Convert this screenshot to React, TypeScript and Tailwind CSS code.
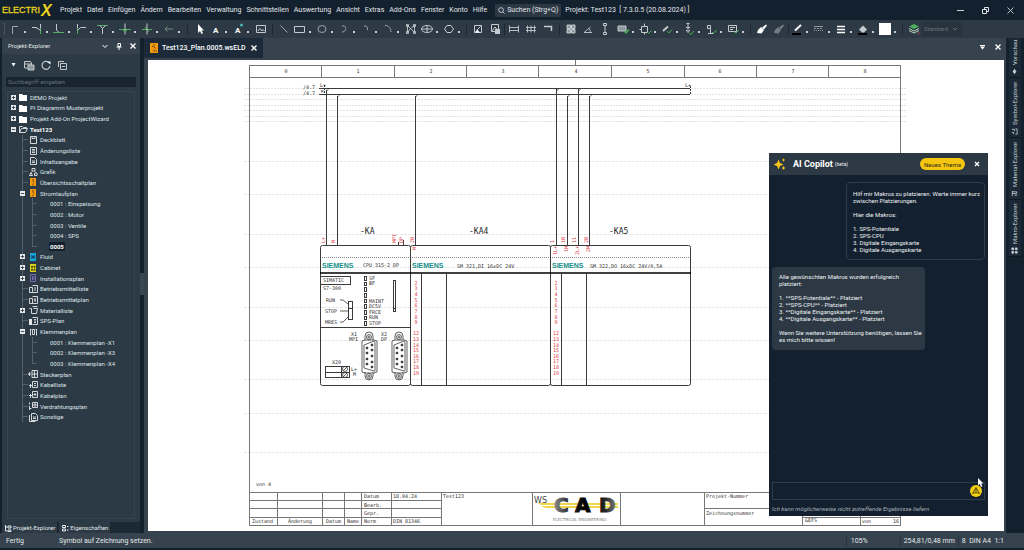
import React from "react";
import type { ReactNode } from "react";

/* ---------- data ---------- */

const MENU = [
  "Projekt", "Datei", "Einfügen", "Ändern", "Bearbeiten", "Verwaltung", "Schnittstellen",
  "Auswertung", "Ansicht", "Extras", "Add-Ons", "Fenster", "Konto", "Hilfe",
];

type Row = { level: number; text: string; icon?: string; open?: "+" | "-"; bold?: boolean; selected?: boolean; last?: boolean };

const TREE: Row[] = [
  { level: 0, text: "DEMO Projekt", icon: "folder", open: "+" },
  { level: 0, text: "PI Diagramm Musterprojekt", icon: "folder", open: "+" },
  { level: 0, text: "Projekt Add-On ProjectWizard", icon: "folder", open: "+" },
  { level: 0, text: "Test123", icon: "folderOpen", open: "-", bold: true },
  { level: 1, text: "Deckblatt", icon: "cover" },
  { level: 1, text: "Änderungsliste", icon: "list" },
  { level: 1, text: "Inhaltsangabe", icon: "page" },
  { level: 1, text: "Grafik", icon: "shapes" },
  { level: 1, text: "Übersichtsschaltplan", icon: "orange" },
  { level: 1, text: "Stromlaufplan", icon: "orange", open: "-" },
  { level: 2, text: "0001 : Einspeisung" },
  { level: 2, text: "0002 : Motor" },
  { level: 2, text: "0003 : Ventile" },
  { level: 2, text: "0004 : SPS" },
  { level: 2, text: "0005", selected: true, bold: true, last: true },
  { level: 1, text: "Fluid", icon: "blue", open: "+" },
  { level: 1, text: "Cabinet", icon: "yellow", open: "+" },
  { level: 1, text: "Installationsplan", icon: "purple", open: "+" },
  { level: 1, text: "Betriebsmittelliste", icon: "devlist" },
  { level: 1, text: "Betriebsmittelplan", icon: "devplan" },
  { level: 1, text: "Materialliste", icon: "cart", open: "+" },
  { level: 1, text: "SPS-Plan", icon: "plc" },
  { level: 1, text: "Klemmenplan", icon: "terminal", open: "-" },
  { level: 2, text: "0001 : Klemmenplan -X1" },
  { level: 2, text: "0002 : Klemmenplan -X3" },
  { level: 2, text: "0003 : Klemmenplan -X4", last: true },
  { level: 1, text: "Steckerplan", icon: "plug" },
  { level: 1, text: "Kabelliste", icon: "cablelist" },
  { level: 1, text: "Kabelplan", icon: "cableplan" },
  { level: 1, text: "Verdrahtungsplan", icon: "wiring" },
  { level: 1, text: "Sonstige", icon: "misc", last: true },
];

/* ---------- tree icons ---------- */

function TreeIcon({ name }: { name: string }) {
  const art: Record<string, ReactNode> = {
    folder: <path d="M1 2h3l1 1h4v6H1z" fill="#fff" stroke="none" />,
    folderOpen: <path d="M1.500 8.500v-6h3l1 1h3v1M1.500 8.500l2-4h6l-2 4z" />,
    cover: <path d="M2.500 1.500h6v7h-6zM4 1.500v2h3v-2" />,
    list: <path d="M2.500 1.500h6v7h-6zM4 3.500h3M4 5h3M4 6.500h3" />,
    page: <path d="M2.500 1.500h4l2 2v5h-6zM4 5h3M4 6.500h3" />,
    shapes: <path d="M4 1.500h3v2.500H4zM1.500 8.500l1.500-3 1.500 3zM6.500 6h2.500v2.500H6.500zM4 4.500l-1 1M7 4.500l1 1" />,
    orange: (
      <>
        <path d="M2 1h6v8H2z" fill="#f39a12" stroke="none" />
        <path d="M5 2v2l1 1.500M5 6.500v2" stroke="#5c3a05" />
      </>
    ),
    blue: (
      <>
        <path d="M2 1h6v8H2z" fill="#16a5d8" stroke="none" />
        <path d="M2.500 5h5M3.500 3l3 4M6.500 3l-3 4" stroke="#0b3d5c" />
      </>
    ),
    yellow: (
      <>
        <path d="M2 1h6v8H2z" fill="#e2d51d" stroke="none" />
        <path d="M3.500 3h1v1.500h-1zM6 3h1v1.500H6zM3.500 6h1v1.500h-1zM6 6h1v1.500H6z" stroke="#4b4708" />
      </>
    ),
    purple: <path d="M2.500 1.500h5v7h-5zM4.500 3v4M6 3v4" stroke="#8272c4" />,
    devlist: <path d="M1.500 3.500h3v5h-3zM4.500 1.500h5v7h-5M6 4h2M6 6h2" />,
    devplan: <path d="M1.500 3.500h3v5h-3zM4.500 1.500h5v7h-5M7 3v4M6 5h2" />,
    cart: <path d="M1.500 3.500h2v5h5l1-5h-4M4.500 1.500h5" />,
    plc: (
      <>
        <path d="M1 3h3v6H1z" fill="#e5e8ea" stroke="none" />
        <path d="M4.500 1.500h5v7h-5M6 3.500h2M6 5h2M6 6.500h2" />
      </>
    ),
    terminal: <path d="M2.500 2v6.500M8.500 2v6.500M4.500 2.500h2v5h-2zM2.500 2.500h1M7.500 2.500h1" />,
    plug: <path d="M0 5h3M1.500 3v4M4 1.500h5.500v7H4zM4 5h5.500M6.500 1.500v7" />,
    cablelist: <path d="M1 5.500h3M2.500 4v4M4.500 1.500h5v6h-5zM6 3.500h2M6 5.500h2" />,
    cableplan: <path d="M1 5.500h3M2.500 4v4M4.500 1.500h5v6h-5zM7 3v3M5.500 4.500h3" />,
    wiring: <path d="M1.500 1.500v2M1.500 5v4M4.500 1.500h5v5h-5zM7 2v4M5 4h4M1.500 7.500h2" />,
    misc: <path d="M3.500 1.500h4l2 2v5h-6zM1.500 3v6.500h6M5 5h3M5 6.500h3" />,
  };
  return (
    <svg viewBox="0 0 11 10" className="h-[10px] w-[11px] shrink-0" fill="none" stroke="#e5e8ea" strokeWidth="0.9" aria-hidden="true">
      {art[name]}
    </svg>
  );
}

function Expander({ sign }: { sign: "+" | "-" }) {
  return (
    <svg viewBox="0 0 6 6" className="h-[5px] w-[5px] shrink-0" aria-hidden="true">
      <rect width="6" height="6" fill="#e9ecee" />
      <path d={sign === "+" ? "M1 3h4M3 1v4" : "M1 3h4"} stroke="#26323d" strokeWidth="1" />
    </svg>
  );
}

function TreeRow({ row }: { row: Row }) {
  return (
    <li className="flex items-center">
      {row.level >= 1 && (
        <span className="ml-[11px] flex w-[6px] shrink-0 items-center self-stretch">
          <span className="flex w-full items-center self-stretch border-l border-[#53616c]">
            {row.level === 1 && !row.open && <span className="w-full border-t border-[#53616c]" />}
            {row.open && <span className="-ml-[3px] flex"><Expander sign={row.open} /></span>}
          </span>
        </span>
      )}
      {row.level === 2 && (
        <span className="ml-1 flex w-[17px] shrink-0 self-stretch">
          <span className={row.last ? "mb-[5px] flex w-[5px] items-end border-l border-b border-[#53616c]" : "flex w-[5px] items-center border-l border-[#53616c]"}>
            {!row.last && <span className="w-full border-t border-[#53616c]" />}
          </span>
        </span>
      )}
      {row.level === 0 && <span className="flex w-[7px] shrink-0"><Expander sign={row.open ?? "+"} /></span>}
      {row.icon && <TreeIcon name={row.icon} />}
      <button
        type="button"
        className={
          "whitespace-nowrap px-px text-left text-[6px] leading-[9px] " +
          (row.bold ? "font-bold text-white " : "text-[#dfe4e8] ") +
          (row.selected ? "bg-[#14202d]" : "")
        }
      >
        {row.text}
      </button>
    </li>
  );
}

/* ---------- toolbar ---------- */

function Tool({ label, dot, dim, children }: { label: string; dot?: boolean; dim?: boolean; children: ReactNode }) {
  return (
    <button type="button" aria-label={label} className={dot ? "flex w-[22px] shrink-0 items-center pl-px" : "flex w-[17px] shrink-0 items-center justify-center"}>
      <svg viewBox="0 0 14 14" className="size-[14px] shrink-0" fill="none" stroke={dim ? "#727c84" : "#c3c9cd"} strokeWidth="1" aria-hidden="true">
        {children}
      </svg>
      {dot && <span className="mt-[6px] ml-[2px] size-[2px] shrink-0 bg-[#c9ced2]" />}
    </button>
  );
}

function Sep({ wide }: { wide?: boolean }) {
  return (
    <span className={wide ? "flex w-[6px] shrink-0 justify-center" : "flex w-[2px] shrink-0 justify-center"}>
      <span className="h-3 w-px bg-[#1c2935]" />
    </span>
  );
}

const GREEN = "#4fae5b";

function Toolbar() {
  return (
    <div role="toolbar" className="flex h-[18px] shrink-0 items-center bg-[#2d3a45] pl-1">
      <span className="mr-px h-3 w-[2px] border-l border-dotted border-[#5b6872]" />
      <Tool label="Verbindung" dot><path d="M4.500 12V4.500H10" stroke="#9aa4ab" /></Tool>
      <Tool label="Abzweig links" dot><path d="M2 5.500h5M10.500 2v10" stroke={GREEN} /><path d="M2 5.500h4l4 2.500h1M10.500 2v4" /></Tool>
      <Tool label="Abzweig unten" dot><path d="M1 10.500h11" stroke={GREEN} /><path d="M4.500 2v6l2.500 2.500" /></Tool>
      <Tool label="Abzweig rechts" dot><path d="M3.500 2v10" stroke={GREEN} /><path d="M3.500 8.500l3-3H12M3.500 2v4" /></Tool>
      <Tool label="Abzweig oben" dot><path d="M1 3.500h11" stroke={GREEN} /><path d="M6.500 12V6.500L4 3.500M6.500 6.500l3-3" /></Tool>
      <Tool label="Kreuzung" dot><path d="M1 7.500h12" stroke={GREEN} /><path d="M7 1.500v11" /><path d="M4.500 7.500L7 10l2.500-2.500" stroke={GREEN} /></Tool>
      <Tool label="Knoten" dot><path d="M2 7.500h10M5 5l4 5" stroke={GREEN} /><path d="M7 1.500v11" /></Tool>
      <Tool label="Pfeil" dot><path d="M11 7H3M5.500 4.500L3 7l2.500 2.500" stroke="#6f8b7b" /></Tool>
      <span className="w-px shrink-0" />
      <Sep wide />
      <span className="w-px shrink-0" />
      <Tool label="Auswahl"><path d="M5 2v9l2-2 1.500 3 1.500-.7L8.500 8.500H11z" fill="#fff" stroke="none" /></Tool>
      <Tool label="Text" dot><text x="4" y="11" fontSize="8" fontWeight="700" fontFamily="Roboto, sans-serif" fill="#fff" stroke="none">A</text></Tool>
      <Tool label="Referenztext" dot><text x="4" y="11" fontSize="8" fontWeight="700" fontFamily="Roboto, sans-serif" fill="#fff" stroke="none">A</text><circle cx="10.500" cy="3" r="1.500" fill="#49b8b4" stroke="none" /></Tool>
      <Tool label="Bild"><path d="M2.500 3.500h9v7h-9zM4 9l2-2.500L8 9l1-1.500L10.500 9" /></Tool>
      <Sep wide />
      <Tool label="Linie"><path d="M3.500 3.500l7 7" stroke="#9aa4ab" /></Tool>
      <Tool label="Rechteck" dot><path d="M1.500 4.500h10v6h-10z" /></Tool>
      <Tool label="Ellipse" dot><ellipse cx="7" cy="7" rx="4" ry="3.500" stroke="#9aa4ab" /></Tool>
      <Tool label="Bogen" dot><path d="M5 4c5-1 5 6 0 6" stroke="#9aa4ab" /></Tool>
      <Tool label="Kreisbogen" dot><path d="M5 4c2.500-.5 4 1.500 3.500 4" stroke="#9aa4ab" /></Tool>
      <Tool label="Viertelbogen" dot><path d="M4 3.500c4 0 6 3 6 6.500" stroke="#9aa4ab" /></Tool>
      <Tool label="Polygon"><path d="M3.500 3.500l3 3 4-3M3.500 3.500v7l3-4M10.500 3.500v7M6.500 6.500l4 4M2.500 2.500h2v2h-2zM9.500 2.500h2v2h-2zM2.500 9.500h2v2h-2zM9.500 9.500h2v2h-2z" strokeWidth="0.900" /></Tool>
      <Tool label="Fläche" dot><ellipse cx="7" cy="7" rx="5.500" ry="3.500" /><path d="M1.500 7h11M7 3.500v7" /></Tool>
      <Tool label="Sechseck" dot><path d="M5 3.500h4L11.500 7 9 10.500H5L2.500 7z" /></Tool>
      <Sep wide />
      <Tool label="Grafik"><path d="M3.500 3.500h7v7h-7zM6 8l3.500-3.500" /><path d="M4 10.500l2-3 3 3z" fill="#fff" stroke="none" /></Tool>
      <Tool label="Grafik einfügen"><path d="M3.500 2.500h7v7h-7zM4 9l3-4 2 2.500" /><path d="M7 7h5v5H7z" fill="#c3c9cd" stroke="none" /></Tool>
      <Sep />
      <Tool label="Bemaßung"><path d="M2.500 3.500v7M11.500 3.500v7M2.500 5.500h9M2.500 8.500h9" strokeWidth="0.900" /></Tool>
      <Tool label="Kettenmaß"><path d="M3.500 3.500v7M7 3.500v7M10.500 3.500v7M2 5.500h10M2 8.500h10" strokeWidth="0.900" /></Tool>
      <Tool label="Versatz"><path d="M3 4.500h7.500V9" strokeWidth="1.500" /></Tool>
      <Sep wide />
      <Tool label="Raster"><path d="M3 3h3.500v3.500H3zM7.500 3H11v3.500H7.500zM3 7.500h3.500V11H3zM7.500 7.500H11V11H7.500z" fill="#8d979e" /></Tool>
      <Tool label="Winkel"><path d="M3 10.500h8M3 10.500L9.500 5M7.500 6.500c2 1 2 3 1.500 4" strokeWidth="0.900" /></Tool>
      <Tool label="Abstand"><path d="M7 3v8M5.500 1.500h3v2h-3zM5.500 10.500h3v2h-3z" /></Tool>
      <span className="w-[2px] shrink-0" />
      <Tool label="Bauteil prüfen" dot><path d="M2 4h8v5H2z" fill="#8d979e" /><path d="M8 9l2 2 3-3.500" stroke={GREEN} strokeWidth="1.500" /></Tool>
      <Tool label="Symbol prüfen" dot><path d="M3.500 4.500h6v6h-6zM6.500 1.500v3M6.500 10.500v2M1.500 7.500h2" /><path d="M9 10l1.500 1.500 3-3" stroke={GREEN} /></Tool>
      <Tool label="Verbindung prüfen" dot><path d="M3 9l5-4.500" strokeWidth="2" /><path d="M7 9l2 2 3-3.500" stroke={GREEN} /></Tool>
      <Tool label="Klemme prüfen" dot><path d="M6 2v7M4 5.500h4M4 8l2 2.500L8 8M4.500 1.500h3" /><path d="M7 11l2 1.500 3-3.500" stroke={GREEN} /></Tool>
      <Tool label="Kabel prüfen" dot><path d="M3.500 3.500h3v3h-3zM6.500 6.500v5M4 11.500h5" /><path d="M8 10l1.500 1.500 3-3.500" stroke={GREEN} /></Tool>
      <Tool label="Formular prüfen" dot><path d="M2.500 3.500h8v6h-8zM4 5.500h5M4 7.500h3" /><path d="M8 9.500l2 1.500 3-3" stroke={GREEN} /></Tool>
      <Sep wide />
      <Tool label="Format übertragen"><path d="M3 8l3-3 3 3-2.500 3.500L2 11zM7 5.500l4-3 1 1L9 7.500z" fill="#fff" stroke="none" /></Tool>
      <Tool label="Format einfügen" dim><path d="M3 8l3-3 3 3-2.500 3.500L2 11zM7 5.500l4-3 1 1L9 7.500z" fill="#727c84" stroke="none" /></Tool>
      <Sep />
      <Tool label="Linienfarbe" dot><path d="M5 8.500l6-5.500" stroke="#fff" strokeWidth="1.800" /><path d="M2 11h9v2H2z" fill="#000" stroke="none" /></Tool>
      <Tool label="Linienart" dot><g stroke="#8d979e"><path d="M2 4.500h9" /><path d="M2 6.500h9" strokeDasharray="2 1" /><path d="M2 8.500h9" strokeDasharray="1 1" /></g></Tool>
      <Tool label="Linienstärke" dot><path d="M3 4.500h8M3 7.500h8M3 10.500h8" strokeWidth="1.400" stroke="#fff" /></Tool>
      <Tool label="Füllfarbe" dot><path d="M3 7.500l4-4 4 4-3 3H6z" fill="#c3c9cd" stroke="none" /><path d="M2 11h9v2H2z" fill="#000" stroke="none" /></Tool>
      <Tool label="Weiß" dot><path d="M1 1h12v12H1z" fill="#fff" stroke="none" /></Tool>
      <Sep wide />
      <Tool label="Ebenen"><path d="M7 2l5 2.500L7 7 2 4.500z" fill={GREEN} stroke="none" /><path d="M2 6.500L7 9l5-2.500M2 8.500L7 11l5-2.500" stroke="#b9d6bd" /><path d="M10.500 10.500l2 2M12.500 10.500l-2 2" stroke="#a8405c" /></Tool>
      <label className="relative flex items-center">
        <span className="sr-only">Ebene</span>
        <select className="h-[14px] w-10 appearance-none bg-[#27333d] pl-[2px] text-[6px] leading-[14px] text-[#66717a]">
          <option>Standard</option>
        </select>
        <svg viewBox="0 0 6 4" className="pointer-events-none absolute right-1 h-1 w-[6px]" fill="none" stroke="#66717a" aria-hidden="true"><path d="M1 1l2 2 2-2" /></svg>
      </label>
    </div>
  );
}

/* ---------- schematic ---------- */

const LINE = "#3a3a3a";
const RED = "#e03a40";
const PINS: [string, number][] = [
  ["2", 283], ["3", 288], ["4", 294], ["5", 300], ["6", 305], ["7", 311], ["8", 317], ["9", 322],
  ["12", 333], ["13", 339], ["14", 345], ["15", 350], ["16", 356], ["17", 361], ["18", 367], ["19", 373],
];

function Connector({ x }: { x: number }) {
  return (
    <g transform={`translate(${x} 331)`} fill="none" stroke={LINE} strokeWidth="0.8">
      <path d="M4 9V5q0-4 4-4t4 4v4M4 41v4q0 4 4 4t4-4v-4" />
      <circle cx="8" cy="6" r="2.500" />
      <circle cx="8" cy="6" r="1" />
      <circle cx="8" cy="45" r="2.500" />
      <circle cx="8" cy="45" r="1" />
      <path d="M1 10l3-1h9l3 1v31l-3 1H4l-3-1z" />
      <path d="M3 14l10-4q1 0 1 2v27q0 2-1 1L3 37z" />
      {[14, 19, 25, 31, 36].map((y) => <circle key={y} cx="11" cy={y} r="1" fill="#111" />)}
      {[17, 22, 28, 33].map((y) => <circle key={y} cx="6" cy={y} r="1" fill="#111" />)}
    </g>
  );
}

function Side({ x, y, children, fill = RED }: { x: number; y: number; children: ReactNode; fill?: string }) {
  return <text transform={`translate(${x} ${y}) rotate(-90)`} fill={fill}>{children}</text>;
}

function Schematic() {
  return (
    <svg
      viewBox="148 60 856 471"
      className="block h-full w-full"
      role="img"
      aria-label="Stromlaufplan 0005"
      fontFamily="'DejaVu Sans Mono', 'Liberation Mono', monospace"
      fontSize="5"
      fill="#333"
    >
      {/* guide lines */}
      <g fill="none" shapeRendering="crispEdges">
        <path d="M244 88.500H906M244 94.500H906M244 99.500H906M244 105.500H906M244 110.500H906M244 116.500H906M244 121.500H906" stroke="#e2e2e2" strokeDasharray="2 1" />
        <path d="M244 161.500H906M244 194.500H906M244 234.500H906M244 267.500H906M244 307.500H906M244 340.500H906M244 379.500H906M244 413.500H906M244 452.500H906" stroke="#e6e6e6" strokeDasharray="3 1" />
      </g>

      {/* sheet frame */}
      <g fill="none" stroke="#777" shapeRendering="crispEdges">
        <path d="M249.500 65.500H900.500V525.500H249.500zM249.500 77.500H900" />
        <path d="M321.500 65v12M394.500 65v12M466.500 65v12M538.500 65v12M611.500 65v12M684.500 65v12M756.500 65v12M828.500 65v12M575.500 60v5" />
      </g>
      <g textAnchor="middle">
        {[0, 1, 2, 3, 4, 5, 6, 7, 8].map((n) => <text key={n} x={286 + Math.round(n * 72.4)} y="73">{n}</text>)}
      </g>

      {/* potentials and wires */}
      <g fill="none" stroke={LINE} shapeRendering="crispEdges">
        <path d="M319 88.500H690M319 94.500H690" />
        <path d="M326.500 90V245M337.500 96V245M415.500 96V245M556.500 88V245M567.500 96V245M578.500 88V245M589.500 96V245" />
        <path d="M324.500 85v10M690.500 86v9" strokeDasharray="2 1" />
        <path d="M403.500 240v5M398.500 242v3" />
      </g>
      <path d="M326.500 91l3-3M337.500 97l3-3M415.500 97l3-3M556.500 91l3-3M567.500 97l3-3M578.500 91l3-3M589.500 97l3-3" stroke={LINE} strokeWidth="0.8" />
      <text x="303" y="89">/4.7</text>
      <text x="303" y="95">/4.7</text>
      <text x="320" y="87">L+</text>
      <text x="685" y="87">L+</text>
      <text x="321" y="93" fontSize="4">M</text>

      {/* modules */}
      <g fill="none" stroke={LINE}>
        <rect x="320.500" y="245.500" width="90" height="140" rx="2" />
        <rect x="410.500" y="245.500" width="140" height="140" rx="2" />
        <rect x="550.500" y="245.500" width="140" height="140" rx="2" />
        <path d="M322 257.500H409M412 257.500H549M552 257.500H689" stroke="#888" strokeDasharray="1 1" />
        <path d="M320 273H691" stroke="#000" strokeWidth="1.500" />
        <path d="M320 327.500h90M421.500 273v112M446.500 273v112M561.500 273v112M586.500 273v112" />
      </g>
      <g fill="#148f8c" fontFamily="'Liberation Sans', Arial, sans-serif" fontWeight="700" fontSize="7">
        <text x="322" y="268">SIEMENS</text>
        <text x="412" y="268">SIEMENS</text>
        <text x="552" y="268">SIEMENS</text>
      </g>
      <g fontSize="8" fill="#222">
        <text x="360" y="234">-KA</text>
        <text x="469" y="234">-KA4</text>
        <text x="609" y="234">-KA5</text>
      </g>
      <text x="363" y="267">CPU 315-2 DP</text>
      <text x="457" y="268">SM 321,DI 16xDC 24V</text>
      <text x="590" y="268">SM 322,DO 16xDC 24V/0,5A</text>

      <g fill={RED} textAnchor="middle">
        {PINS.map(([p, y]) => <text key={p} x="416" y={y + 2}>{p}</text>)}
        {PINS.map(([p, y]) => <text key={p} x="556" y={y + 2}>{p}</text>)}
      </g>
      <Side x={325} y={243}>L+</Side>
      <Side x={335} y={243}>M</Side>
      <Side x={396} y={243}>MPI</Side>
      <Side x={403} y={243}>DP</Side>
      <Side x={414} y={243}>20</Side>
      <Side x={416} y={250}>M</Side>
      <Side x={554} y={243}>1</Side>
      <Side x={565} y={243}>10</Side>
      <Side x={576} y={243}>11</Side>
      <Side x={588} y={243}>20</Side>
      <Side x={557} y={255}>1L+</Side>
      <Side x={568} y={252}>1M</Side>
      <Side x={579} y={255}>2L+</Side>
      <Side x={590} y={252}>2M</Side>

      {/* CPU front */}
      <g fill="none" stroke={LINE} shapeRendering="crispEdges">
        <path d="M321 276.500h29.500v8H321" />
        <path d="M348.500 301.500h4v18h-4zM348.500 308.500h4" />
        <path d="M364.500 276.500h2v4h-2zM364.500 282.500h2v3h-2zM364.500 287.500h2v4h-2zM364.500 293.500h2v4h-2zM364.500 299.500h2v3h-2zM364.500 304.500h2v4h-2zM364.500 310.500h2v4h-2zM364.500 316.500h2v3h-2zM364.500 321.500h2v4h-2z" />
        <path d="M393.500 280.500h2v31h-2zM393.500 308.500h2" />
        <path d="M325.500 366.500h24v11h-24zM341.500 366v12M325 372.500h24" />
      </g>
      <g fill="none" stroke={LINE} strokeWidth="0.8">
        <path d="M340 300h3l5 4M340 311h8M340 322h3l5-5" />
        <circle cx="345" cy="369" r="2.500" />
        <circle cx="345" cy="375" r="2.500" />
        <path d="M343 371l4-4M343 377l4-4" />
      </g>
      <text x="323" y="282">SIMATIC</text>
      <text x="323" y="290">S7-300</text>
      <text x="326" y="302">RUN</text>
      <text x="325" y="313">STOP</text>
      <text x="325" y="324">MRES</text>
      <text x="369" y="280">SF</text>
      <text x="369" y="285">BF</text>
      <text x="369" y="303">MAINT</text>
      <text x="369" y="308">DC5V</text>
      <text x="369" y="314">FRCE</text>
      <text x="369" y="319">RUN</text>
      <text x="369" y="325">STOP</text>
      <text x="351" y="336">X1</text>
      <text x="349" y="341">MPI</text>
      <text x="381" y="336">X2</text>
      <text x="381" y="341">DP</text>
      <text x="332" y="364">X20</text>
      <text x="351" y="371">L+</text>
      <text x="353" y="376">M</text>
      <Connector x={361} />
      <Connector x={391} />

      {/* title block */}
      <g fill="none" stroke="#777" shapeRendering="crispEdges">
        <path d="M249 492.500H900M249 500.500H441M249 508.500H441M249 517.500H441M277.500 492v33M322.500 492v33M344.500 492v33M361.500 492v33M391.500 492v33M441.500 492v33M532.500 492v33M620.500 492v33M704.500 492v33" />
        <path d="M704 508.500H900M802.500 508v17M860.500 508v17M802 517.500H900" />
      </g>
      <text x="256" y="486">von 4</text>
      <text x="364" y="498">Datum</text>
      <text x="393" y="498">18.04.24</text>
      <text x="443" y="498">Test123</text>
      <text x="364" y="507">Bearb.</text>
      <text x="364" y="515">Gepr.</text>
      <text x="252" y="523">Zustand</text>
      <text x="288" y="523">Änderung</text>
      <text x="326" y="523">Datum</text>
      <text x="347" y="523">Name</text>
      <text x="364" y="523">Norm</text>
      <text x="393" y="523">DIN 81346</text>
      <text x="706" y="498">Projekt-Nummer</text>
      <text x="706" y="515">Zeichnungsnummer</text>
      <text x="805" y="522">&amp;EFS</text>
      <text x="862" y="523">von</text>
      <text x="893" y="523">16</text>

      {/* WSCAD logo */}
      <defs>
        <linearGradient id="metal" gradientUnits="userSpaceOnUse" x1="552" y1="0" x2="618" y2="0">
          <stop offset="0" stopColor="#9a9a9a" />
          <stop offset="0.250" stopColor="#2a2a2a" />
          <stop offset="0.500" stopColor="#000" />
          <stop offset="0.800" stopColor="#222" />
          <stop offset="1" stopColor="#8a8a8a" />
        </linearGradient>
      </defs>
      <path d="M538 503H618v2H541zM541 506H618v2H546z" fill="#f0d64a" />
      <g fontFamily="'DejaVu Sans', sans-serif" fontWeight="700">
        <text x="534" y="503" fontSize="8" fontWeight="400" fill="#444">WS</text>
        <g fontSize="20" fill="url(#metal)" stroke="url(#metal)" strokeWidth="1">
          <text x="554" y="512">C</text>
          <text x="575" y="512">A</text>
          <text x="599" y="512">D</text>
        </g>
      </g>
      <text x="553" y="521" fontSize="4" fontFamily="'DejaVu Sans', sans-serif" fill="#777">ELECTRICAL ENGINEERING</text>
    </svg>
  );
}

/* ---------- copilot ---------- */

function Copilot() {
  return (
    <section aria-label="AI Copilot" className="absolute top-[93px] right-4 bottom-[15px] flex w-[219px] flex-col bg-[#13202f] text-[6px] leading-[7px] text-[#eef1f3]">
      <header className="flex h-[22px] shrink-0 items-center bg-[#2c3944] pr-2 pl-[5px]">
        <svg viewBox="0 0 12 12" className="size-3" fill="#f5c518" aria-hidden="true">
          <path d="M4.500 1.500L6 5l3.500 1.500L6 8l-1.500 3.500L3 8-.5 6.500 3 5zM9.500 0l.6 1.400 1.400.6-1.400.6L9.500 4l-.6-1.400L7.500 2l1.400-.6zM9.500 8l.7 1.300 1.300.7-1.300.7-.7 1.300-.7-1.300-1.300-.7 1.300-.7z" />
        </svg>
        <h2 className="ml-[7px] text-[9px] leading-[12px] font-bold text-white">AI Copilot</h2>
        <span className="ml-[2px] text-[5px]">(beta)</span>
        <button type="button" className="ml-auto h-3 rounded-full bg-[#f5c60f] px-1 text-[6px] text-[#2b2a1c]">Neues Thema</button>
        <button type="button" aria-label="Schließen" className="ml-[9px] flex">
          <svg viewBox="0 0 6 6" className="size-[6px]" stroke="#fff" strokeWidth="1.300" aria-hidden="true"><path d="M1 1l4 4M5 1L1 5" /></svg>
        </button>
      </header>
      <div className="flex flex-1 flex-col gap-[7px] pt-[7px] pr-[3px] pl-[3px]">
        <div className="w-[139px] self-end rounded-[4px] border border-[#2f3d49] px-[6px] pt-[7px] pb-[6px]">
          <p className="whitespace-nowrap">Hilf mir Makros zu platzieren. Warte immer kurz<br />zwischen Platzierungen.</p>
          <p className="mt-[7px]">Hier die Makros:</p>
          <p className="mt-[7px]">1. SPS-Potentiale<br />2. SPS-CPU<br />3. Digitale Eingangskarte<br />4. Digitale Ausgangskarte</p>
        </div>
        <div className="w-[153px] rounded-[4px] bg-[#2c3944] px-[7px] pt-[6px] pb-[7px]">
          <p>Alle gewünschten Makros wurden erfolgreich<br />platziert:</p>
          <p className="mt-[7px]">1. **SPS-Potentiale** - Platziert<br />2. **SPS-CPU** - Platziert<br />3. **Digitale Eingangskarte** - Platziert<br />4. **Digitale Ausgangskarte** - Platziert</p>
          <p className="mt-[7px] whitespace-nowrap">Wenn Sie weitere Unterstützung benötigen, lassen Sie<br />es mich bitte wissen!</p>
        </div>
      </div>
      <form className="relative px-[3px]">
        <input aria-label="Nachricht" className="block h-[18px] w-full border border-[#2f3d49] bg-transparent px-1 text-[6px] outline-none" />
        <button type="button" aria-label="Senden" className="absolute top-[3px] right-[6px] flex size-3 items-center justify-center rounded-full bg-[#f5cf12]">
          <svg viewBox="0 0 10 10" className="size-[10px]" fill="none" stroke="#4a3e08" strokeWidth="0.9" aria-hidden="true"><path d="M5 1.500l3.500 6L5 6.500l-3.500 1zM5 3v3.500" /></svg>
        </button>
        <svg viewBox="0 0 7 9" className="pointer-events-none absolute -top-1 right-[4px] h-[9px] w-[7px]" fill="#fff" aria-hidden="true"><path d="M1 0v7.500l1.700-1.600L4 9l1.500-.7-1.300-2.800h2.300z" /></svg>
      </form>
      <p className="px-[3px] pt-[5px] pb-[4px] text-[#aab3ba] italic">Ich kann möglicherweise nicht zutreffende Ergebnisse liefern</p>
    </section>
  );
}

/* ---------- shell ---------- */

function SideTab({ text, children, height }: { text: string; children: ReactNode; height: string }) {
  return (
    <button type="button" className={"flex w-3 shrink-0 rotate-180 items-center gap-[3px] border-t border-[#0e1822] bg-[#1b2936] pt-[2px] text-[6px] leading-[12px] whitespace-nowrap text-[#cdd4d9] [writing-mode:vertical-rl] " + height}>
      <svg viewBox="0 0 8 8" className="size-[7px] shrink-0 rotate-180" fill="none" stroke="#cdd4d9" strokeWidth="0.9" aria-hidden="true">{children}</svg>
      {text}
    </button>
  );
}

function Cross() {
  return <svg viewBox="0 0 6 6" className="size-[6px]" stroke="#fff" strokeWidth="1.300" aria-hidden="true"><path d="M.5 .5l5 5M5.500 .5l-5 5" /></svg>;
}

export default function App() {
  return (
    <div className="flex h-screen flex-col overflow-hidden bg-[#13202e] font-[Roboto,sans-serif] text-[7px] leading-[10px] text-[#e3e7ea]">
      <header className="flex h-5 shrink-0 items-center pl-[2px]">
        <svg viewBox="0 0 54 18" className="h-[18px] w-[54px] shrink-0" role="img" aria-label="Electrix" fontFamily="'Liberation Sans', Arial, sans-serif" fill="#e8d01c">
          <text x="0" y="12" fontSize="9" stroke="#e8d01c" strokeWidth="0.3">ELECTRI</text>
          <text x="39" y="15" fontSize="16" fontWeight="700" fontStyle="italic">X</text>
        </svg>
        <nav className="ml-1 flex gap-[5px]">
          {MENU.map((m) => <button type="button" key={m} className="whitespace-nowrap">{m}</button>)}
        </nav>
        <button type="button" className="ml-2 flex h-[13px] items-center gap-[2px] bg-[#2b3844] px-[3px] whitespace-nowrap">
          <svg viewBox="0 0 8 8" className="size-[7px]" fill="none" stroke="#cdd4d9" aria-hidden="true"><circle cx="3.500" cy="3.500" r="2.700" /><path d="M5.500 5.500l2 2" /></svg>
          Suchen (Strg+Q)
        </button>
        <span className="ml-1 whitespace-pre">Projekt: Test123  [ 7.3.0.5 (20.08.2024) ]</span>
        <div className="mr-[10px] ml-auto flex items-center gap-[18px]">
          <button type="button" aria-label="Minimieren" className="flex"><svg viewBox="0 0 7 7" className="size-[7px]" stroke="#cdd4d9" aria-hidden="true"><path d="M0 3.500h7" /></svg></button>
          <button type="button" aria-label="Verkleinern" className="flex"><svg viewBox="0 0 7 7" className="size-[7px]" fill="none" stroke="#e3e7ea" aria-hidden="true"><path d="M.5 2.500h4v4h-4zM2.500 2V.5h4v4H5" /></svg></button>
          <button type="button" aria-label="Beenden" className="flex"><svg viewBox="0 0 7 7" className="size-[7px]" stroke="#cdd4d9" strokeWidth="0.900" aria-hidden="true"><path d="M.5 .5l6 6M6.500 .5l-6 6" /></svg></button>
        </div>
      </header>

      <Toolbar />

      <div className="flex min-h-0 flex-1">
        {/* project explorer */}
        <aside className="ml-[2px] flex w-[138px] shrink-0 flex-col">
          <div className="flex min-h-0 flex-1 flex-col bg-[#2c3a45]">
            <div className="flex h-4 shrink-0 items-center bg-[#34414c] pr-1 pl-[6px] text-[6px]">
              <h2>Projekt-Explorer</h2>
              <div className="ml-auto flex items-center gap-2">
                <button type="button" aria-label="Menü" className="flex"><svg viewBox="0 0 6 6" className="size-[6px]" fill="none" stroke="#fff" aria-hidden="true"><path d="M.5 2L3 4.500 5.500 2" /></svg></button>
                <button type="button" aria-label="Anheften" className="flex"><svg viewBox="0 0 6 7" className="h-[7px] w-[6px]" fill="none" stroke="#fff" aria-hidden="true"><path d="M2 .5h2.500v3H2zM.5 4h5M3 4v3" /></svg></button>
                <button type="button" aria-label="Schließen" className="flex"><Cross /></button>
              </div>
            </div>
            <div className="flex h-[22px] shrink-0 items-center gap-[6px] pl-[9px]">
              <button type="button" aria-label="Filter" className="flex"><svg viewBox="0 0 5 4" className="h-1 w-[5px]" fill="#fff" aria-hidden="true"><path d="M.5 0h4L2.500 3.500z" /></svg></button>
              <button type="button" aria-label="Ordner" className="ml-px flex"><svg viewBox="0 0 12 11" className="h-[11px] w-3" fill="none" stroke="#c3c9cd" aria-hidden="true"><path d="M1.500 1.500h6l1 1.500v5h-7zM1.500 4h7" /><path d="M5 5h6v5H5z" fill="#8d979e" /></svg></button>
              <button type="button" aria-label="Aktualisieren" className="flex"><svg viewBox="0 0 10 10" className="size-[10px]" fill="none" stroke="#c3c9cd" strokeWidth="1.200" aria-hidden="true"><path d="M7 1.800A4 4 0 1 0 9 6" /><path d="M5.500 1.500h4v3z" fill="#fff" stroke="none" /></svg></button>
              <button type="button" aria-label="Alle zuklappen" className="flex"><svg viewBox="0 0 10 10" className="size-[10px]" fill="none" stroke="#c3c9cd" aria-hidden="true"><path d="M3.500 3.500h6v6h-6zM5 6.500h3M1.500 7V1.500H7" /></svg></button>
            </div>
            <input type="search" aria-label="Suchbegriff" placeholder="Suchbegriff eingeben" className="mx-1 mt-px h-[10px] shrink-0 bg-[#182431] px-[2px] text-[6px] text-white outline-none placeholder:text-[#64717c]" />
            <div className="mx-[5px] mt-[4px] mb-[3px] min-h-0 flex-1 border border-[#364450]">
              <ul className="grid h-[330px] auto-rows-fr pl-[3px]">
                {TREE.map((r) => <TreeRow key={r.text} row={r} />)}
              </ul>
            </div>
          </div>
          <div className="flex h-[11px] shrink-0 gap-[2px] bg-[#1b2936] text-[6px] leading-[11px]">
            <button type="button" className="flex items-center gap-px bg-[#2c3a45] px-[2px] whitespace-nowrap">
              <svg viewBox="0 0 8 8" className="size-2" fill="none" stroke="#e5e8ea" aria-hidden="true"><path d="M1.500 1v6h2M1.500 3h2M4 2h3v2H4zM4 6h3v1.500H4z" /></svg>
              Projekt-Explorer
            </button>
            <button type="button" className="flex items-center gap-px bg-[#2c3a45] px-[2px] whitespace-nowrap">
              <svg viewBox="0 0 8 8" className="size-2" fill="none" stroke="#e5e8ea" aria-hidden="true"><path d="M1.500 1.500h3v2h-3zM1.500 5h3v2h-3zM6 2.500h1.500M6 6h1.500" /></svg>
              Eigenschaften
            </button>
          </div>
        </aside>
        <div className="flex w-1 shrink-0 items-center">
          <span className="mb-1 h-[22px] w-1 bg-[#3a4753]" />
        </div>

        {/* editor */}
        <main className="flex min-w-0 flex-1 flex-col bg-[#36434e]">
          <div className="flex h-[22px] shrink-0 items-start">
            <div className="flex h-5 items-center gap-[4px] bg-[#1c2a3a] pr-[6px] pl-[6px] text-[7px] text-white">
              <svg viewBox="0 0 8 10" className="h-[10px] w-2" aria-hidden="true"><path d="M0 0h8v10H0z" fill="#f39a12" /><path d="M4 1v2.500l1.500 2M4 6.500V9M2 3.500h1M5.500 8H7" stroke="#6b4206" fill="none" /></svg>
              <span className="font-medium">Test123_Plan.0005.wsELD</span>
              <button type="button" aria-label="Tab schließen" className="ml-px flex"><Cross /></button>
            </div>
            <div className="mt-[6px] mr-[5px] ml-auto flex items-center gap-[10px]">
              <button type="button" aria-label="Tab-Liste" className="flex"><svg viewBox="0 0 5 5" className="size-[5px]" fill="#fff" aria-hidden="true"><path d="M0 0h5v1H0zM0 1.500h5L2.500 4.500z" /></svg></button>
              <button type="button" aria-label="Alle schließen" className="flex"><Cross /></button>
            </div>
          </div>
          <div className="relative mr-[2px] mb-[2px] ml-1 min-h-0 flex-1 bg-white">
            <Schematic />
            <Copilot />
          </div>
        </main>

        {/* right dock */}
        <aside className="flex w-[18px] shrink-0 flex-col items-center">
          <SideTab text="Vorschau" height="h-10"><circle cx="4" cy="4" r="1.500" fill="#cdd4d9" /><path d="M4 1v6" /></SideTab>
          <SideTab text="Symbol-Explorer" height="h-[60px]"><path d="M1 1.500h3v2M5 1h2v6H5M1 5h2v2" /></SideTab>
          <SideTab text="Material-Explorer" height="h-[62px]"><path d="M1.500 1v6M1.500 2h5v2h-5M4 6h3" /></SideTab>
          <SideTab text="Makro-Explorer" height="h-[57px]"><path d="M1 1h2v2H1zM5 1h2v2H5zM1 5h2v2H1zM5 5h2v2H5z" fill="#cdd4d9" /></SideTab>
        </aside>
      </div>

      <footer className="mb-[2px] flex h-[15px] shrink-0 items-center bg-[#36434e] pr-5 pl-[6px] text-[7px]">
        <span className="w-[53px]">Fertig</span>
        <span>Symbol auf Zeichnung setzen.</span>
        <span className="ml-auto border-l border-[#27333d] pl-1">105%</span>
        <span className="ml-8 border-l border-[#27333d] pl-[3px]">254,81/0,48 mm</span>
        <span className="ml-[3px] border-l border-[#27333d] pl-[3px] whitespace-pre">8  DIN A4  1:1</span>
      </footer>
    </div>
  );
}
